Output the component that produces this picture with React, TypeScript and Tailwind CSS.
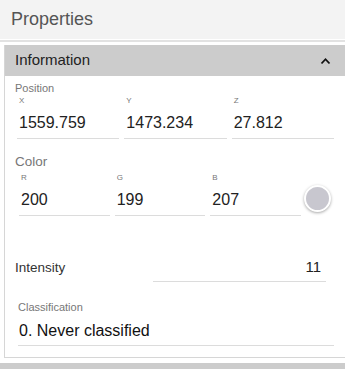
import React from 'react';

const font = { fontFamily: '"Liberation Sans", Arial, sans-serif' };

const Field: React.FC<{ label: string; value: string; className?: string }> = ({ label, value, className }) => (
  <div className={className}>
    <div className="text-[8px] leading-[10px] text-[#777] pl-[2px]">{label}</div>
    <div className="mt-[7px] pb-[5px] border-b border-[#dcdcdc] text-[16px] leading-[20px] text-[#222] pl-[2px]">
      {value}
    </div>
  </div>
);

export default function App() {
  return (
    <div className="w-[345px] h-[369px] bg-white overflow-hidden" style={font}>
      <div className="h-[39px] bg-[#f3f3f3] flex items-center pl-[11px] text-[18px] text-[#555]">
        Properties
      </div>
      <div className="mt-[1px] h-[2px] bg-[#e2e2e2]" />
      <div className="mt-[3px] ml-[4px] border-l border-b border-[#d6d6d6]">
        <div className="h-[31px] bg-[#cccccc] flex items-center justify-between pl-[10px] pr-[14px] text-[15px] text-[#222]">
          <span>Information</span>
          <svg width="11" height="8" viewBox="0 0 11 8" fill="none">
            <path d="M1.5 6.5 L5.5 2.2 L9.5 6.5" stroke="#111" strokeWidth="1.8" />
          </svg>
        </div>
        <div className="pl-[10px] pt-[6px]">
          <div className="text-[11px] leading-[13px] text-[#777]">Position</div>
          <div className="flex gap-[5px] mt-[1px] pl-[2px] pr-[11px]">
            <Field label="X" value="1559.759" className="flex-1" />
            <Field label="Y" value="1473.234" className="flex-1" />
            <Field label="Z" value="27.812" className="flex-1" />
          </div>
          <div className="mt-[15px] text-[13.5px] leading-[16px] text-[#777]">Color</div>
          <div className="flex items-center mt-[3px] pr-[14px]">
            <div className="flex gap-[5px] flex-1 pl-[4px]">
              <Field label="R" value="200" className="flex-1" />
              <Field label="G" value="199" className="flex-1" />
              <Field label="B" value="207" className="flex-1" />
            </div>
            <div className="ml-[3px] mt-[8px] w-[27px] h-[27px] rounded-full bg-[#c8c7cf] border-[2px] border-white shadow-[0_1px_3px_rgba(0,0,0,0.35)]" />
          </div>
          <div className="mt-[42px] flex items-end pr-[19px]">
            <div className="w-[138px] text-[13.5px] leading-[16px] text-[#333] pb-[6px]">Intensity</div>
            <div className="flex-1 text-right text-[15px] leading-[18px] text-[#222] pb-[5px] border-b border-[#dcdcdc] pr-[5px]">
              11
            </div>
          </div>
          <div className="mt-[19px] pl-[3px] pr-[11px] pb-[11px]">
            <div className="text-[11px] leading-[13px] text-[#777]">Classification</div>
            <div className="mt-[7px] pb-[5px] border-b border-[#dcdcdc] text-[16px] leading-[19px] text-[#111] pl-[1px]">
              0. Never classified
            </div>
          </div>
        </div>
      </div>
      <div className="mt-[5px] h-[10px] bg-[#cccccc]" />
    </div>
  );
}
